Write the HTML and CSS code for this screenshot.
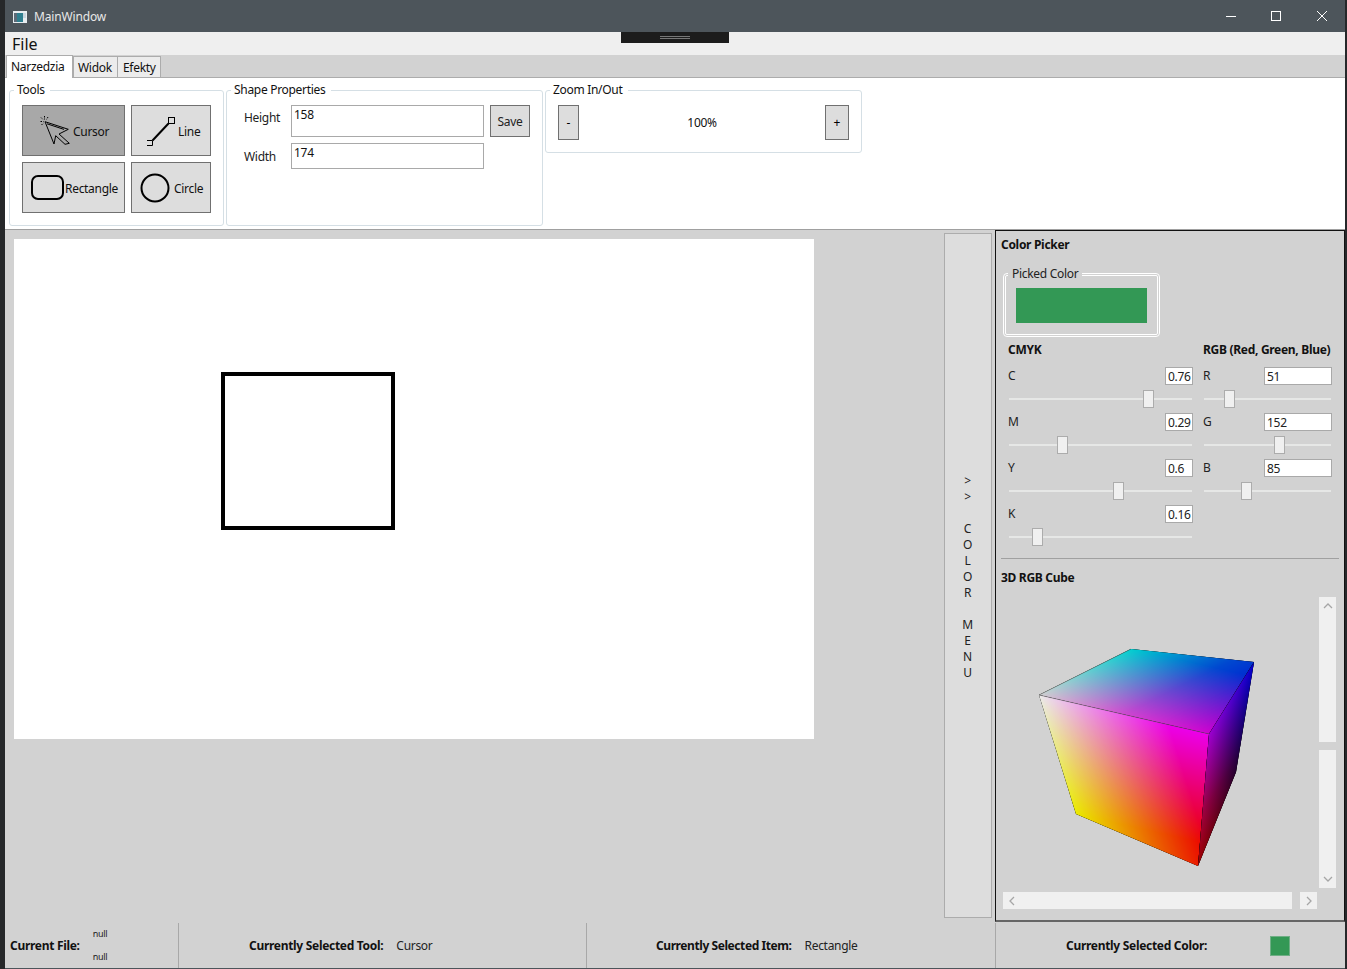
FILE: index.html
```html
<!DOCTYPE html>
<html lang="en">
<head>
    <meta charset="UTF-8">
    <meta name="viewport" content="width=device-width, initial-scale=1.0">
    <title>MainWindow</title>
    <link rel="stylesheet" href="styles.css">
</head>
<body>
<div class="window">
    <div class="titlebar">
        <svg class="app-icon" width="14" height="12" viewBox="0 0 14 12">
            <rect width="14" height="12" fill="#e8edf0"/>
            <rect x="1" y="2" width="3" height="9" fill="#5b6b78"/>
            <rect x="4" y="2" width="6" height="9" fill="#2f7f8f"/>
            <rect x="10" y="2" width="3" height="5" fill="#c9d6de"/>
        </svg>
        <span class="app-title">MainWindow</span>
        <div class="win-controls">
            <svg class="win-btn" width="12" height="12" viewBox="0 0 12 12"><path d="M1 6.5h10" stroke="#fff" fill="none"/></svg>
            <svg class="win-btn" width="12" height="12" viewBox="0 0 12 12"><rect x="1.5" y="1.5" width="9" height="9" stroke="#fff" fill="none"/></svg>
            <svg class="win-btn win-close" width="12" height="12" viewBox="0 0 12 12"><path d="M1 1l10 10M11 1L1 11" stroke="#fff" fill="none"/></svg>
        </div>
    </div>

    <div class="menubar">
        <span class="menu-item">File</span>
        <div class="grip"><span class="grip-lines"></span></div>
    </div>

    <div class="tabstrip">
        <span class="tab active">Narzedzia</span>
        <span class="tab">Widok</span>
        <span class="tab">Efekty</span>
    </div>

    <div class="ribbon">
        <fieldset class="group tools-group">
            <legend>Tools</legend>
            <div class="tool-grid">
                <button class="tool selected">
                    <svg class="icon-cursor" width="36" height="36" viewBox="0 0 36 36">
                        <path d="M7 8.7L30.3 16.3 21 21 31.3 30.3 27 31.3 17.7 22.7 16 31Z" fill="none" stroke="#000"/>
                        <path d="M9 10.8L26 16.4" fill="none" stroke="#000"/>
                        <path d="M6.5 3v3.5M3 4.5l2 2M2.5 8.5h3M3.5 12l2-2M10 4L8.5 6.5" fill="none" stroke="#000" stroke-dasharray="1.5 1"/>
                    </svg>
                    <span>Cursor</span>
                </button>
                <button class="tool">
                    <svg class="icon-line" width="32" height="32" viewBox="0 0 32 32">
                        <rect x="24.5" y="2.5" width="6" height="6" fill="none" stroke="#000"/>
                        <path d="M3 25.5h5.5v5H3" fill="none" stroke="#000"/>
                        <path d="M24.5 8.5L8.5 25.5" stroke="#000" stroke-width="2"/>
                    </svg>
                    <span>Line</span>
                </button>
                <button class="tool">
                    <svg class="icon-rect" width="33" height="25" viewBox="0 0 33 25">
                        <rect x="1" y="1" width="31" height="23" rx="6" fill="none" stroke="#000" stroke-width="2"/>
                    </svg>
                    <span>Rectangle</span>
                </button>
                <button class="tool">
                    <svg class="icon-circle" width="30" height="30" viewBox="0 0 30 30">
                        <circle cx="15" cy="15" r="13.5" fill="none" stroke="#000" stroke-width="2"/>
                    </svg>
                    <span>Circle</span>
                </button>
            </div>
        </fieldset>

        <fieldset class="group shape-group">
            <legend>Shape Properties</legend>
            <div class="shape-grid">
                <span class="shape-label label-height">Height</span>
                <div class="field field-tall">158</div>
                <button class="save">Save</button>
                <span class="shape-label label-width">Width</span>
                <div class="field field-short">174</div>
            </div>
        </fieldset>

        <fieldset class="group zoom-group">
            <legend>Zoom In/Out</legend>
            <div class="zoom-row">
                <button class="zoom-btn zoom-out">-</button>
                <span class="zoom-value">100%</span>
                <button class="zoom-btn zoom-in">+</button>
            </div>
        </fieldset>
    </div>

    <div class="workspace">
        <div class="canvas-area">
            <div class="canvas">
                <div class="shape-rect"></div>
            </div>
        </div>

        <div class="color-toggle">
            <span>&gt;</span><span>&gt;</span><span>&nbsp;</span>
            <span>C</span><span>O</span><span>L</span><span>O</span><span>R</span><span>&nbsp;</span>
            <span>M</span><span>E</span><span>N</span><span>U</span>
        </div>

        <div class="color-panel">
            <div class="panel-title">Color Picker</div>
            <fieldset class="picked">
                <legend>Picked Color</legend>
                <div class="picked-swatch"></div>
            </fieldset>

            <div class="sliders">
                <div class="col-cmyk">
                    <div class="col-head">CMYK</div>
                    <div class="row">
                        <div class="row-top"><span>C</span><div class="num num-small">0.76</div></div>
                        <div class="slider"><i class="thumb" style="left:135px"></i></div>
                    </div>
                    <div class="row">
                        <div class="row-top"><span>M</span><div class="num num-small">0.29</div></div>
                        <div class="slider"><i class="thumb" style="left:49px"></i></div>
                    </div>
                    <div class="row">
                        <div class="row-top"><span>Y</span><div class="num num-small">0.6</div></div>
                        <div class="slider"><i class="thumb" style="left:105px"></i></div>
                    </div>
                    <div class="row">
                        <div class="row-top"><span>K</span><div class="num num-small">0.16</div></div>
                        <div class="slider"><i class="thumb" style="left:24px"></i></div>
                    </div>
                </div>
                <div class="col-rgb">
                    <div class="col-head">RGB (Red, Green, Blue)</div>
                    <div class="row">
                        <div class="row-top"><span>R</span><div class="num num-wide">51</div></div>
                        <div class="slider"><i class="thumb" style="left:21px"></i></div>
                    </div>
                    <div class="row">
                        <div class="row-top"><span>G</span><div class="num num-wide">152</div></div>
                        <div class="slider"><i class="thumb" style="left:71px"></i></div>
                    </div>
                    <div class="row">
                        <div class="row-top"><span>B</span><div class="num num-wide">85</div></div>
                        <div class="slider"><i class="thumb" style="left:38px"></i></div>
                    </div>
                </div>
            </div>

            <div class="divider"></div>
            <div class="panel-title cube-title">3D RGB Cube</div>

            <div class="cube-scroll">
                <svg class="cube" width="314" height="291" viewBox="1003 597 314 291">
                    <defs>
                        <linearGradient id="frontG" gradientUnits="userSpaceOnUse" x1="1039" y1="695" x2="1148.8" y2="660.8">
                            <stop offset="0" stop-color="#0f0"/><stop offset="1" stop-color="#000"/>
                        </linearGradient>
                        <linearGradient id="frontB" gradientUnits="userSpaceOnUse" x1="1039" y1="695" x2="1015" y2="800">
                            <stop offset="0" stop-color="#00f"/><stop offset="1" stop-color="#000"/>
                        </linearGradient>
                        <linearGradient id="topR" gradientUnits="userSpaceOnUse" x1="1039" y1="695" x2="1053.6" y2="631">
                            <stop offset="0" stop-color="#f00"/><stop offset="1" stop-color="#000"/>
                        </linearGradient>
                        <linearGradient id="topG" gradientUnits="userSpaceOnUse" x1="1039" y1="695" x2="1088.6" y2="794">
                            <stop offset="0" stop-color="#0f0"/><stop offset=".5" stop-color="#005800"/><stop offset="1" stop-color="#000"/>
                        </linearGradient>
                        <linearGradient id="rightR" gradientUnits="userSpaceOnUse" x1="1209" y1="734" x2="1247.8" y2="737.2">
                            <stop offset="0" stop-color="#a00000"/><stop offset="1" stop-color="#000"/>
                        </linearGradient>
                        <linearGradient id="rightB" gradientUnits="userSpaceOnUse" x1="1209" y1="734" x2="1260.4" y2="766">
                            <stop offset="0" stop-color="#0000d0"/><stop offset=".6" stop-color="#000040"/><stop offset="1" stop-color="#000"/>
                        </linearGradient>
                    </defs>
                    <g class="face">
                        <polygon points="1039,695 1131,649 1254,662 1209,734" fill="#00f"/>
                        <polygon class="add" points="1039,695 1131,649 1254,662 1209,734" fill="url(#topR)"/>
                        <polygon class="add" points="1039,695 1131,649 1254,662 1209,734" fill="url(#topG)"/>
                        <polygon class="dim-top" points="1039,695 1131,649 1254,662 1209,734"/>
                    </g>
                    <g class="face">
                        <polygon points="1039,695 1209,734 1198,866 1076,814" fill="#f00"/>
                        <polygon class="add" points="1039,695 1209,734 1198,866 1076,814" fill="url(#frontG)"/>
                        <polygon class="add" points="1039,695 1209,734 1198,866 1076,814" fill="url(#frontB)"/>
                        <polygon class="dim-front" points="1039,695 1209,734 1198,866 1076,814"/>
                    </g>
                    <g class="face">
                        <polygon points="1209,734 1254,662 1236,772 1198,866" fill="#000"/>
                        <polygon class="add" points="1209,734 1254,662 1236,772 1198,866" fill="url(#rightR)"/>
                        <polygon class="add" points="1209,734 1254,662 1236,772 1198,866" fill="url(#rightB)"/>
                    </g>
                    <path d="M1039 695L1131 649M1039 695L1209 734" stroke="#555" stroke-width=".6" opacity=".6" fill="none"/>
                </svg>

                <div class="vbar">
                    <div class="bar-seg seg-up">
                        <svg width="10" height="8" viewBox="0 0 10 8"><path d="M1 6l4-4 4 4" fill="none" stroke="#a6a6a6" stroke-width="1.3"/></svg>
                    </div>
                    <div class="bar-seg seg-down">
                        <svg width="10" height="8" viewBox="0 0 10 8"><path d="M1 2l4 4 4-4" fill="none" stroke="#a6a6a6" stroke-width="1.3"/></svg>
                    </div>
                </div>

                <div class="hbar">
                    <div class="bar-seg seg-left">
                        <svg width="8" height="10" viewBox="0 0 8 10"><path d="M6 1L2 5l4 4" fill="none" stroke="#a6a6a6" stroke-width="1.3"/></svg>
                    </div>
                    <div class="bar-seg seg-right">
                        <svg width="8" height="10" viewBox="0 0 8 10"><path d="M2 1l4 4-4 4" fill="none" stroke="#a6a6a6" stroke-width="1.3"/></svg>
                    </div>
                </div>
            </div>
        </div>
    </div>

    <div class="statusbar">
        <div class="status status-file">
            <b>Current File:</b>
            <div class="nulls"><span>null</span><span>null</span></div>
        </div>
        <div class="status status-tool"><b>Currently Selected Tool:</b><span>Cursor</span></div>
        <div class="status status-item"><b>Currently Selected Item:</b><span>Rectangle</span></div>
        <div class="status status-color"><b>Currently Selected Color:</b><i class="status-swatch"></i></div>
    </div>
</div>
</body>
</html>
```

FILE: styles.css
```css
* {
    box-sizing: border-box;
}
html, body {
    margin: 0;
    padding: 0;
    height: 969px;
    overflow: hidden;
    background-color: #26282a;
}
body {
    font-family: "Noto Sans", "Open Sans", sans-serif;
    font-size: 12px;
    letter-spacing: -0.3px;
    color: #111;
}
.window {
    width: 1340px;
    height: 969px;
    margin-left: 5px;
    padding-top: 1px;
    display: flex;
    flex-direction: column;
    background-color: #4d555b;
}

/* title bar */
.titlebar {
    height: 31px;
    flex: none;
    display: flex;
    align-items: center;
    padding-left: 8px;
    color: #e8e8e8;
}
.app-icon {
    margin-right: 7px;
}
.app-title {
    font-size: 12px;
    letter-spacing: -0.15px;
}
.win-controls {
    margin-left: auto;
    display: flex;
    gap: 33px;
    padding-right: 17px;
    margin-top: -1px;
}
.win-close {
    margin-left: 1px;
}

/* menu */
.menubar {
    height: 23px;
    flex: none;
    background-color: #efefef;
    position: relative;
    padding-left: 7px;
    font-size: 16px;
    letter-spacing: 0;
    line-height: 24px;
}
.grip {
    position: absolute;
    left: 616px;
    top: 0;
    width: 108px;
    height: 11px;
    background-color: #1c1c1c;
    display: flex;
    justify-content: center;
    align-items: center;
}
.grip-lines {
    width: 30px;
    height: 3px;
    border-top: 1px solid #777;
    border-bottom: 1px solid #777;
}

/* tabs */
.tabstrip {
    height: 23px;
    flex: none;
    background-color: #d2d2d2;
    border-bottom: 1px solid #acacac;
    display: flex;
    align-items: flex-end;
    padding-left: 1px;
}
.tab {
    height: 21px;
    padding: 0 5px;
    line-height: 22px;
    background-color: #ececec;
    border: 1px solid #acacac;
    border-bottom: none;
    margin-left: -1px;
}
.tab.active {
    height: 23px;
    margin-bottom: -1px;
    margin-left: 0;
    padding: 0 4px 3px;
    background-color: #fff;
    z-index: 1;
    width: 67px;
    line-height: 21px;
}
.tab:nth-child(2) {
    margin-left: 0;
    width: 45px;
    padding-left: 4px;
}
.tab:nth-child(3) {
    width: 44px;
}

/* ribbon */
.ribbon {
    height: 152px;
    flex: none;
    background-color: #fff;
    border-bottom: 1px solid #a0a0a0;
    display: flex;
    align-items: flex-start;
    gap: 2px;
    padding: 4px 0 0 4px;
}
.group {
    margin: 0;
    min-width: 0;
    border: 1px solid #d5dfe5;
    border-radius: 3px;
}
.group legend {
    padding: 0 5px 0 3px;
    margin-left: -8px;
    line-height: 16px;
    height: 16px;
}
.tools-group {
    width: 215px;
    height: 144px;
    padding: 7px 0 0 12px;
}
.tool-grid {
    display: grid;
    grid-template-columns: 103px 80px;
    grid-template-rows: 51px 51px;
    gap: 6px;
}
.tool {
    font: inherit;
    letter-spacing: inherit;
    color: #111;
    padding: 0;
    background-color: #dddddd;
    border: 1px solid #707070;
    display: flex;
    align-items: center;
    text-align: left;
}
.tool span {
    padding-top: 2px;
}
.tool.selected {
    background-color: #a8a8a8;
}
.icon-cursor {
    margin: 0 -1px 0 15px;
}
.icon-line {
    margin: 0 2px 0 12px;
}
.icon-rect {
    margin: 0 1px 0 8px;
}
.icon-circle {
    margin: 0 4px 0 8px;
}
.shape-group {
    width: 317px;
    height: 144px;
    padding: 7px 0 0 17px;
}
.shape-group legend {
    margin-left: -13px;
}
.shape-grid {
    display: grid;
    grid-template-columns: 47px 193px 40px;
    grid-template-rows: 32px 26px;
    row-gap: 6px;
    align-items: center;
}
.shape-label {
    color: #222;
}
.label-height {
    padding-bottom: 8px;
}
.field {
    background-color: #fff;
    border: 1px solid #a9a9a9;
    padding: 0 2px;
    line-height: 17px;
    height: 100%;
}
.save {
    font: inherit;
    letter-spacing: inherit;
    color: #222;
    margin-left: 6px;
    width: 40px;
    height: 32px;
    padding: 0;
    background-color: #dddddd;
    border: 1px solid #707070;
}
.zoom-group {
    width: 317px;
    height: 71px;
    padding: 7px 12px 0 12px;
}
.zoom-row {
    display: flex;
    align-items: center;
    height: 35px;
}
.zoom-btn {
    font: inherit;
    padding: 0;
    height: 35px;
    background-color: #dddddd;
    border: 1px solid #707070;
}
.zoom-out {
    width: 21px;
}
.zoom-in {
    width: 24px;
}
.zoom-value {
    flex: 1;
    text-align: center;
}

/* main area */
.workspace {
    flex: 1;
    min-height: 0;
    display: flex;
    background-color: #d2d2d2;
}
.canvas-area {
    width: 935px;
    flex: none;
    padding: 9px 0 0 9px;
    margin-right: 4px;
}
.canvas {
    width: 800px;
    height: 500px;
    background-color: #fff;
    position: relative;
}
.shape-rect {
    position: absolute;
    left: 207px;
    top: 133px;
    width: 174px;
    height: 158px;
    border: 4px solid #000;
}
.color-toggle {
    width: 48px;
    flex: none;
    height: 685px;
    margin-top: 3px;
    padding: 3px 1px 0 0;
    background-color: #dddddd;
    border: 1px solid #acacac;
    display: flex;
    flex-direction: column;
    align-items: center;
    justify-content: center;
    line-height: 16px;
    color: #222;
}
.color-panel {
    width: 350px;
    flex: none;
    margin-left: 3px;
    height: 692px;
    border: 1px solid #111;
    border-bottom: 2px solid #666;
    padding: 5px 5px 0 5px;
}
.panel-title {
    font-weight: 700;
    line-height: 18px;
    height: 18px;
}
.picked {
    width: 157px;
    height: 71px;
    margin: 12px 0 0 2px;
    padding: 0;
    border: 3px double #fff;
    border-radius: 4px;
    display: block;
}
.picked legend {
    padding: 0 4px;
    margin-left: 2px;
    line-height: 16px;
    height: 16px;
    color: #222;
}
.picked-swatch {
    width: 131px;
    height: 35px;
    margin: 6px 0 0 10px;
    background-color: #339855;
}
.sliders {
    display: flex;
    margin: 4px 0 0 7px;
}
.col-cmyk {
    width: 195px;
    padding-right: 10px;
}
.col-rgb {
    width: 129px;
}
.col-head {
    font-weight: 700;
    height: 18px;
    line-height: 18px;
    margin-bottom: 8px;
    white-space: nowrap;
}
.row {
    height: 46px;
}
.row-top {
    height: 18px;
    display: flex;
    justify-content: space-between;
    color: #222;
}
.num {
    height: 18px;
    background-color: #fff;
    border: 1px solid #a9a9a9;
    padding: 0 2px;
    line-height: 17px;
}
.num-small {
    width: 28px;
}
.num-wide {
    width: 68px;
}
.slider {
    position: relative;
    height: 18px;
    margin-top: 5px;
}
.slider::before {
    content: "";
    position: absolute;
    left: 1px;
    right: 1px;
    top: 8px;
    height: 2px;
    background-color: #e6e7e6;
}
.thumb {
    position: absolute;
    top: 0;
    width: 11px;
    height: 18px;
    background-color: #f0f0f0;
    border: 1px solid #acacac;
}
.divider {
    height: 1px;
    background-color: #a0a0a0;
    margin: 7px 0 0 0;
}
.cube-title {
    margin-top: 10px;
}
.cube-scroll {
    display: grid;
    grid-template-columns: 314px 17px;
    grid-template-rows: 291px 17px;
    column-gap: 2px;
    row-gap: 4px;
    margin: 10px 0 0 2px;
}
.face {
    isolation: isolate;
}
.add {
    mix-blend-mode: screen;
}
.dim-top {
    fill: #d0d0d0;
    mix-blend-mode: multiply;
}
.dim-front {
    fill: #ebebeb;
    mix-blend-mode: multiply;
}
.bar-seg {
    background-color: #f0f0f0;
    display: flex;
    align-items: center;
    justify-content: center;
}
.vbar {
    display: flex;
    flex-direction: column;
    gap: 8px;
}
.seg-up {
    height: 145px;
    align-items: flex-start;
    padding-top: 5px;
}
.seg-down {
    flex: 1;
    align-items: flex-end;
    padding-bottom: 5px;
}
.hbar {
    display: flex;
    gap: 8px;
}
.seg-left {
    width: 289px;
    justify-content: flex-start;
    padding-left: 5px;
}
.seg-right {
    flex: 1;
}

/* status bar */
.statusbar {
    height: 46px;
    flex: none;
    background-color: #d2d2d2;
    margin-bottom: 1px;
    display: flex;
    color: #222;
}
.status {
    display: flex;
    align-items: center;
    border-right: 1px solid #a8a8a8;
    height: 45px;
    margin-top: 1px;
}
.status b {
    color: #111;
    font-weight: 700;
    white-space: nowrap;
}
.status-file {
    width: 174px;
    padding-left: 5px;
}
.nulls {
    display: flex;
    flex-direction: column;
    gap: 9px;
    margin-left: 13px;
    font-size: 9px;
    line-height: 14px;
}
.status-tool {
    width: 408px;
    padding-left: 70px;
}
.status-tool span,
.status-item span {
    margin-left: 13px;
}
.status-item {
    width: 409px;
    padding-left: 69px;
}
.status-item b {
    letter-spacing: -0.42px;
}
.status-color {
    border-right: none;
    flex: 1;
    padding-left: 70px;
}
.status-swatch {
    width: 20px;
    height: 20px;
    margin-left: 63px;
    background-color: #339855;
    border: 1px solid #6fae85;
}
```
